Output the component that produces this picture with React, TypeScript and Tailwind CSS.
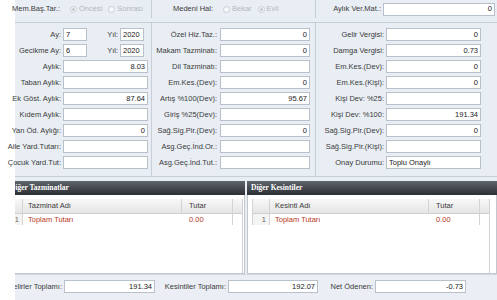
import React from "react";

type FieldProps = {
  label: string;
  value?: string;
  left?: boolean;
};

function Input({
  value = "",
  left = false,
  className = "",
}: {
  value?: string;
  left?: boolean;
  className?: string;
}) {
  return (
    <div
      className={[
        "flex h-[13px] shrink-0 items-center border border-[#b8c0ca] bg-white px-[2px] leading-none text-[#222]",
        left ? "justify-start" : "justify-end",
        className,
      ].join(" ")}
    >
      {value}
    </div>
  );
}

function Label({ text, className = "" }: { text: string; className?: string }) {
  return (
    <div className={`flex shrink-0 justify-end whitespace-nowrap leading-none text-[#3b3b3b] ${className}`}>
      {text}
    </div>
  );
}

function Radio({ label, checked }: { label: string; checked?: boolean }) {
  return (
    <div className="flex items-center gap-[2px] text-[#b4b8bd]">
      <span className="flex h-[7px] w-[7px] items-center justify-center rounded-full border border-[#c9ced4] bg-[#f7f8fa]">
        {checked ? <span className="h-[3px] w-[3px] rounded-full bg-[#c2c6cb]" /> : null}
      </span>
      <span className="leading-none">{label}</span>
    </div>
  );
}

const leftRows: FieldProps[] = [
  { label: "Aylık:", value: "8.03" },
  { label: "Taban Aylık:" },
  { label: "Ek Göst. Aylık:", value: "87.64" },
  { label: "Kıdem Aylık:" },
  { label: "Yan Öd. Aylığı:", value: "0" },
  { label: "Aile Yard.Tutarı:" },
  { label: "Çocuk Yard.Tut:" },
];

const midRows: FieldProps[] = [
  { label: "Özel Hiz.Taz.:", value: "0" },
  { label: "Makam Tazminatı:", value: "0" },
  { label: "Dil Tazminatı:" },
  { label: "Em.Kes.(Dev):", value: "0" },
  { label: "Artış %100(Dev):", value: "95.67" },
  { label: "Giriş %25(Dev):" },
  { label: "Sağ.Sig.Pir.(Dev):", value: "0" },
  { label: "Asg.Geç.İnd.Or.:" },
  { label: "Asg.Geç.İnd.Tut.:" },
];

const rightRows: FieldProps[] = [
  { label: "Gelir Vergisi:", value: "0" },
  { label: "Damga Vergisi:", value: "0.73" },
  { label: "Em.Kes.(Dev):", value: "0" },
  { label: "Em.Kes.(Kişi):", value: "0" },
  { label: "Kişi Dev: %25:" },
  { label: "Kişi Dev: %100:", value: "191.34" },
  { label: "Sağ.Sig.Pir.(Dev):", value: "0" },
  { label: "Sağ.Sig.Pir.(Kişi):" },
  { label: "Onay Durumu:", value: "Toplu Onaylı", left: true },
];

function GridPanel({
  title,
  nameHeader,
  variant,
}: {
  title: string;
  nameHeader: string;
  variant: "left" | "right";
}) {
  const isLeft = variant === "left";
  return (
    <div className={`flex h-full flex-col ${isLeft ? "w-[230px]" : "w-[250px]"}`}>
      <div className="flex h-[14px] items-center overflow-hidden bg-gradient-to-b from-[#60656c] to-[#2c3035] pl-[4px] font-['Liberation_Serif',serif] text-[7.5px] font-bold whitespace-nowrap text-white">
        {isLeft ? <span className="-ml-[9px]">{title}</span> : title}
      </div>
      <div
        className={[
          "flex flex-1 flex-col border-b border-[#c3c8cf] bg-white pt-[4px]",
          isLeft ? "border-r pr-[1px]" : "border-x pl-[4px] pr-[6px]",
        ].join(" ")}
      >
        <div className="flex flex-1 flex-col border-r border-[#cfd3d8]">
          <div className="flex h-[15px] border-b border-[#d0d0d0] bg-gradient-to-b from-[#f8f8f8] to-[#e5e5e5] text-[#3a3a3a]">
            <div className={`border-r border-[#d4d4d4] ${isLeft ? "w-[8px]" : "w-[18px] border-l"}`} />
            <div className="flex w-[159px] items-center border-r border-[#d4d4d4] pl-[5px]">{nameHeader}</div>
            <div className="flex w-[51px] items-center border-r border-[#d4d4d4] pl-[7px]">Tutar</div>
            <div className="flex-1" />
          </div>
          <div className="flex h-[11px] text-[#b8391c]">
            <div
              className={`flex items-center justify-end border-r border-[#d4d4d4] bg-[#f4f4f4] pr-[3px] text-[#666] ${
                isLeft ? "w-[8px]" : "w-[18px] border-l"
              }`}
            >
              1
            </div>
            <div className="flex w-[159px] items-center pl-[5px]">Toplam Tutarı</div>
            <div className="flex w-[51px] items-center border-r border-[#d4d4d4] pl-[7px]">0.00</div>
            <div className="flex-1" />
          </div>
          <div className="flex-1" />
        </div>
      </div>
    </div>
  );
}

export default function App() {
  return (
    <div className="relative h-[300px] w-[497px] overflow-hidden bg-white font-['Liberation_Sans',Arial,sans-serif] text-[7.5px]">
      <div className="ml-[15px] flex h-[181px] flex-col bg-[#e9eef4]">
        {/* top strip */}
        <div className="flex h-[23px] border-b border-[#c7ced7] pb-[4px]">
          <div className="flex w-[137px] items-center border-r border-[#c7ced7]">
            <Label text="Mem.Baş.Tar.:" className="w-[45px]" />
            <div className="ml-[10px] flex items-center gap-[6px]">
              <Radio label="Öncesi" checked />
              <Radio label="Sonrası" />
            </div>
          </div>
          <div className="flex w-[164px] items-center border-r border-[#c7ced7]">
            <Label text="Medeni Hal:" className="w-[61px]" />
            <div className="ml-[10px] flex items-center gap-[6px]">
              <Radio label="Bekar" />
              <Radio label="Evli" checked />
            </div>
          </div>
          <div className="flex flex-1 items-center gap-[2px]">
            <Label text="Aylık Ver.Mat.:" className="w-[65px]" />
            <Input value="0" className="w-[112px]" />
          </div>
        </div>

        {/* form columns */}
        <div className="flex h-[154px] border-b border-[#c7ced7]">
          <div className="flex w-[137px] flex-col gap-[3px] border-r border-[#c7ced7] pt-[5px]">
            <div className="flex h-[13px] items-center gap-[2px]">
              <Label text="Ay:" className="w-[46px]" />
              <Input value="7" left className="w-[24px]" />
              <Label text="Yıl:" className="w-[29px]" />
              <Input value="2020" left className="w-[24px]" />
            </div>
            <div className="flex h-[13px] items-center gap-[2px]">
              <Label text="Gecikme Ay:" className="w-[46px]" />
              <Input value="6" left className="w-[24px]" />
              <Label text="Yıl:" className="w-[29px]" />
              <Input value="2020" left className="w-[24px]" />
            </div>
            {leftRows.map((r) => (
              <div key={r.label} className="flex h-[13px] items-center gap-[2px]">
                <Label text={r.label} className="w-[46px]" />
                <Input value={r.value} left={r.left} className="w-[85px]" />
              </div>
            ))}
          </div>
          <div className="flex w-[164px] flex-col gap-[3px] border-r border-[#c7ced7] pt-[5px]">
            {midRows.map((r) => (
              <div key={r.label} className="flex h-[13px] items-center gap-[3px]">
                <Label text={r.label} className="w-[65px]" />
                <Input value={r.value} left={r.left} className="w-[90px]" />
              </div>
            ))}
          </div>
          <div className="flex flex-1 flex-col gap-[3px] pt-[5px]">
            {rightRows.map((r) => (
              <div key={r.label} className="flex h-[13px] items-center gap-[2px]">
                <Label text={r.label} className="w-[68px]" />
                <Input value={r.value} left={r.left} className="w-[95px]" />
              </div>
            ))}
          </div>
        </div>
      </div>

      {/* grids */}
      <div className="ml-[15px] flex h-[93px] gap-[2px] bg-[#e9eef4]">
        <GridPanel title="Diğer Tazminatlar" nameHeader="Tazminat Adı" variant="left" />
        <GridPanel title="Diğer Kesintiler" nameHeader="Kesinti Adı" variant="right" />
      </div>

      {/* totals */}
      <div className="ml-[15px] flex h-[26px] items-start overflow-hidden border-t border-[#d3d9e0] bg-[#ebeff5] pt-[5px]">
        <div className="flex h-[13px] items-center gap-[2px]">
          <Label text="Gelirler Toplamı:" className="w-[47px]" />
          <Input value="191.34" className="w-[91px]" />
        </div>
        <div className="ml-[11px] flex h-[13px] items-center gap-[2px]">
          <Label text="Kesintiler Toplamı:" className="w-[60px]" />
          <Input value="192.07" className="w-[90px]" />
        </div>
        <div className="ml-[14px] flex h-[13px] items-center gap-[2px]">
          <Label text="Net Ödenen:" className="w-[41px]" />
          <Input value="-0.73" className="w-[91px]" />
        </div>
      </div>
    </div>
  );
}
